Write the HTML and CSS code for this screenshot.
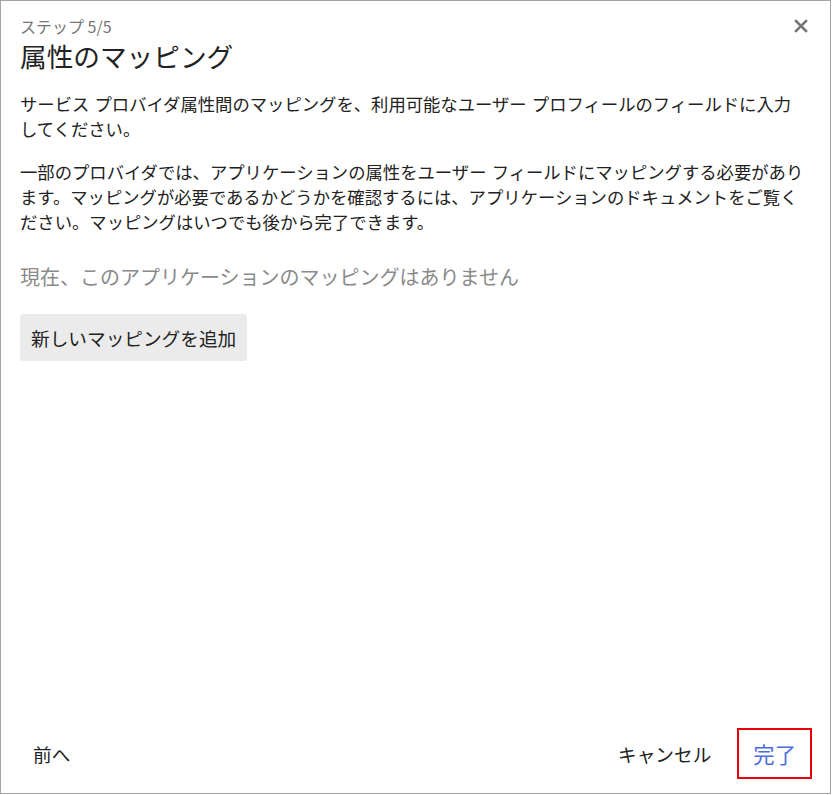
FILE: index.html
```html
<!DOCTYPE html>
<html lang="ja">
<head>
    <meta charset="UTF-8">
    <meta name="viewport" content="width=device-width, initial-scale=1.0">
    <title>属性のマッピング</title>
    <link rel="stylesheet" href="styles.css">
</head>
<body>
    <div class="dialog">
        <div class="dialog-header">
            <div class="step-label">ステップ 5/5</div>
            <h1 class="dialog-title">属性のマッピング</h1>
            <button class="close-btn" aria-label="閉じる">
                <svg width="14" height="14" viewBox="0 0 14 14">
                    <path d="M2 2 L12 12 M12 2 L2 12" stroke="#777" stroke-width="2.6" stroke-linecap="square"/>
                </svg>
            </button>
        </div>

        <div class="dialog-body">
            <p class="desc">サービス プロバイダ属性間のマッピングを、利用可能なユーザー プロフィールのフィールドに入力してください。</p>
            <p class="desc">一部のプロバイダでは、アプリケーションの属性をユーザー フィールドにマッピングする必要があります。マッピングが必要であるかどうかを確認するには、アプリケーションのドキュメントをご覧ください。マッピングはいつでも後から完了できます。</p>
            <div class="empty-note">現在、このアプリケーションのマッピングはありません</div>
            <button class="btn add-btn">新しいマッピングを追加</button>
        </div>

        <div class="dialog-footer">
            <button class="btn text-btn">前へ</button>
            <div class="footer-right">
                <button class="btn text-btn">キャンセル</button>
                <button class="btn text-btn primary highlighted">完了</button>
            </div>
        </div>
    </div>
</body>
</html>
```

FILE: styles.css
```css
* {
    margin: 0;
    padding: 0;
    box-sizing: border-box;
}
body {
    font-family: "Noto Sans CJK JP", "Noto Sans", sans-serif;
    background-color: #fff;
    color: #222;
}
.dialog {
    width: 831px;
    height: 794px;
    border: 1px solid #a5a5a5;
    display: flex;
    flex-direction: column;
    background: white;
}
.dialog-header {
    position: relative;
    padding: 14px 24px 0 19px;
}
.step-label {
    font-size: 16px;
    line-height: 22px;
    color: #757575;
}
.dialog-title {
    font-size: 20pt;
    font-weight: normal;
    line-height: 38px;
    color: #222;
}
.close-btn {
    position: absolute;
    top: 18px;
    right: 22px;
    border: none;
    background: none;
    cursor: pointer;
    display: flex;
}
.dialog-body {
    flex: 1;
    padding: 16px 24px 0 19px;
}
.desc {
    font-size: 13pt;
    line-height: 25px;
    margin-bottom: 18px;
    word-spacing: 1.3px;
}
.empty-note {
    font-size: 15pt;
    color: #8a8a8a;
    line-height: 30px;
    margin-top: 28px;
    margin-bottom: 22px;
}
.btn {
    font-family: inherit;
    border: none;
    cursor: pointer;
    font-size: 14pt;
    color: #222;
    background: none;
}
.add-btn {
    background-color: #ebebeb;
    border-radius: 3px;
    padding: 0 11px;
    height: 47px;
}
.dialog-footer {
    display: flex;
    justify-content: space-between;
    align-items: center;
    padding: 0 18px 14px 18px;
}
.footer-right {
    display: flex;
    align-items: center;
    gap: 12px;
}
.text-btn {
    padding: 0 14px;
    height: 51px;
}
.text-btn.primary {
    color: #4a6ee0;
    font-size: 16pt;
    padding: 0 16px;
}
.highlighted {
    outline: 2px solid #e8000b;
    outline-offset: -2px;
}
```
